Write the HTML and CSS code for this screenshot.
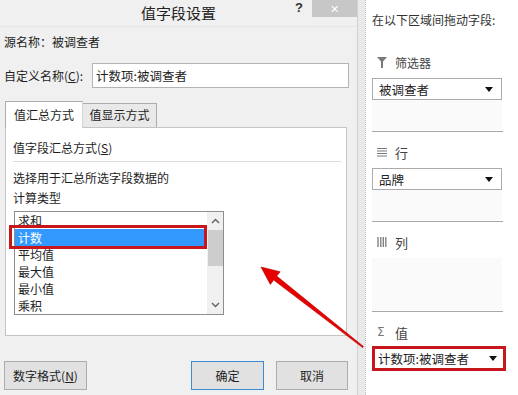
FILE: index.html
```html
<!DOCTYPE html>
<html lang="zh-CN">
<head>
    <meta charset="UTF-8">
    <meta name="viewport" content="width=device-width, initial-scale=1.0">
    <link rel="stylesheet" href="styles.css">
</head>
<body>
    <div class="dialog">
        <div class="titlebar">
            <div class="title">值字段设置</div>
            <div class="title-tools">
                <span class="help">?</span>
                <span class="close">✕</span>
            </div>
        </div>

        <div class="dialog-body">
            <div class="source-row">源名称：被调查者</div>

            <div class="name-row">
                <label class="name-label">自定义名称(<u>C</u>):</label>
                <div class="name-input">计数项:被调查者</div>
            </div>

            <div class="tabs">
                <div class="tab active">值汇总方式</div>
                <div class="tab">值显示方式</div>
            </div>

            <div class="tab-panel">
                <div class="group-title">值字段汇总方式(<u>S</u>)</div>
                <div class="group-line"></div>
                <div class="hint">选择用于汇总所选字段数据的</div>
                <div class="hint">计算类型</div>

                <div class="listbox">
                    <div class="list-items">
                        <div class="list-item">求和</div>
                        <div class="list-item selected">计数</div>
                        <div class="list-item">平均值</div>
                        <div class="list-item">最大值</div>
                        <div class="list-item">最小值</div>
                        <div class="list-item">乘积</div>
                    </div>
                    <div class="scrollbar">
                        <svg class="scroll-arrow" width="9" height="6" viewBox="0 0 9 6"><path d="M1 5 L4.5 1.5 L8 5" fill="none" stroke="#606060" stroke-width="1.4"/></svg>
                        <div class="scroll-thumb"></div>
                        <div class="scroll-track"></div>
                        <svg class="scroll-arrow" width="9" height="6" viewBox="0 0 9 6"><path d="M1 1 L4.5 4.5 L8 1" fill="none" stroke="#606060" stroke-width="1.4"/></svg>
                    </div>
                </div>
            </div>

            <div class="buttons">
                <button class="btn btn-format">数字格式(<u>N</u>)</button>
                <button class="btn btn-ok">确定</button>
                <button class="btn btn-cancel">取消</button>
            </div>
        </div>
    </div>

    <div class="splitter"></div>

    <div class="field-pane">
        <div class="pane-header">在以下区域间拖动字段:</div>

        <div class="zone">
            <div class="zone-title">
                <svg class="zone-icon" width="10" height="11" viewBox="0 0 10 11"><path d="M0 0 H10 L6 4.5 V11 H4 V4.5 Z" fill="#7a7a7a"/></svg>
                <span>筛选器</span>
            </div>
            <div class="zone-area">
                <div class="dropdown">
                    <span>被调查者</span>
                    <svg width="8" height="5" viewBox="0 0 8 5"><path d="M0 0 H8 L4 5 Z" fill="#111"/></svg>
                </div>
            </div>
        </div>

        <div class="zone">
            <div class="zone-title">
                <svg class="zone-icon" width="10" height="9" viewBox="0 0 10 9"><path d="M0 0.5 H10 M0 3 H10 M0 5.5 H10 M0 8 H10" stroke="#7a7a7a" stroke-width="1.2"/></svg>
                <span class="big">行</span>
            </div>
            <div class="zone-area">
                <div class="dropdown">
                    <span>品牌</span>
                    <svg width="8" height="5" viewBox="0 0 8 5"><path d="M0 0 H8 L4 5 Z" fill="#111"/></svg>
                </div>
            </div>
        </div>

        <div class="zone">
            <div class="zone-title">
                <svg class="zone-icon" width="10" height="10" viewBox="0 0 10 10"><path d="M1 0 V10 M3.8 0 V10 M6.3 0 V10 M8.8 0 V10" stroke="#7a7a7a" stroke-width="1.3"/></svg>
                <span class="big">列</span>
            </div>
            <div class="zone-area"></div>
        </div>

        <div class="zone last">
            <div class="zone-title">
                <span class="sigma">Σ</span>
                <span class="big">值</span>
            </div>
            <div class="dropdown marked">
                <span>计数项:被调查者</span>
                <svg width="8" height="5" viewBox="0 0 8 5"><path d="M0 0 H8 L4 5 Z" fill="#111"/></svg>
            </div>
        </div>
    </div>

    <div class="mark-box"></div>

    <svg class="arrow" width="518" height="395" viewBox="0 0 518 395">
        <polygon points="261,267 280.1,271.8 276.7,276.1 363.4,346.4 362.6,347.6 273.7,280.1 270.3,284.4" fill="#e60000" stroke="#b00000" stroke-width="0.6"/>
    </svg>
</body>
</html>
```

FILE: styles.css
```css
* {
    box-sizing: border-box;
}
body {
    margin: 0;
    width: 518px;
    height: 395px;
    overflow: hidden;
    position: relative;
    display: flex;
    background-color: #f0f0f0;
    color: #1e1e1e;
    font-family: "Noto Sans CJK SC", "Liberation Sans", sans-serif;
    font-size: 12px;
}
u {
    text-decoration: underline;
    text-underline-offset: 1px;
}

/* 左侧对话框 */
.dialog {
    width: 357px;
    height: 395px;
    display: flex;
    flex-direction: column;
}
.titlebar {
    height: 27px;
    display: grid;
    grid-template-columns: 1fr auto 1fr;
    border-bottom: 1px solid #e6e6e6;
}
.title {
    grid-column: 2;
    font-size: 15px;
    line-height: 26px;
    color: #222;
}
.title-tools {
    grid-column: 3;
    display: flex;
    justify-content: flex-end;
    align-items: flex-start;
}
.help {
    font-family: "Liberation Sans", sans-serif;
    font-weight: bold;
    font-size: 13px;
    line-height: 16px;
    margin-right: 9px;
    color: #333;
}
.close {
    width: 45px;
    height: 17px;
    background-color: #c7c7c7;
    color: #fff;
    text-align: center;
    line-height: 17px;
    font-size: 11px;
}
.dialog-body {
    flex: 1;
    padding: 0 8px 0 4px;
    display: flex;
    flex-direction: column;
}
.source-row {
    margin-top: 7px;
    line-height: 16px;
}
.name-row {
    margin-top: 13px;
    display: flex;
    align-items: center;
}
.name-label {
    width: 88px;
    line-height: 16px;
}
.name-input {
    flex: 1;
    height: 25px;
    line-height: 23px;
    padding-left: 3px;
    background-color: #fff;
    border: 1px solid #b4b4b4;
    font-size: 12.5px;
}
.tabs {
    margin-top: 13px;
    margin-left: 1px;
    display: flex;
    align-items: flex-end;
    position: relative;
    z-index: 1;
}
.tab {
    width: 74px;
    height: 24px;
    line-height: 22px;
    text-align: center;
    background-color: #e9e9e9;
    border: 1px solid #adadad;
    border-bottom: none;
    border-left: none;
}
.tab.active {
    width: 78px;
    height: 27px;
    line-height: 26px;
    background-color: #fff;
    border-left: 1px solid #adadad;
    border-right: 1px solid #d4d4d4;
    margin-bottom: -1px;
}
.tab-panel {
    margin: 0 2px 0 1px;
    height: 209px;
    background-color: #fff;
    border: 1px solid #c4c4c4;
    padding: 12px 5px 0 7px;
}
.group-title {
    line-height: 16px;
}
.group-line {
    height: 1px;
    background-color: #dcdcdc;
    margin: 5px 0 8px;
}
.hint {
    line-height: 16px;
    margin-bottom: 4px;
}
.listbox {
    margin-top: 5px;
    margin-left: 1px;
    width: 210px;
    height: 104px;
    border: 1px solid #8e8e8e;
    display: flex;
    overflow: hidden;
}
.list-items {
    flex: 1;
}
.list-item {
    height: 17px;
    line-height: 17px;
    padding-left: 3px;
    font-size: 12px;
}
.list-item.selected {
    background-color: #3399ff;
    color: #fff;
    margin-right: 3px;
}
.scrollbar {
    width: 16px;
    background-color: #f0f0f0;
    display: flex;
    flex-direction: column;
    align-items: center;
}
.scroll-arrow {
    margin: 6px 0;
    flex-shrink: 0;
}
.scroll-thumb {
    width: 15px;
    height: 36px;
    background-color: #cdcdcd;
}
.scroll-track {
    flex: 1;
}
.buttons {
    margin-top: 25px;
    display: flex;
    gap: 12px;
}
.btn {
    height: 29px;
    background-color: #e1e1e1;
    border: 1px solid #adadad;
    font-family: inherit;
    font-size: 12px;
    color: #1e1e1e;
    padding: 0;
}
.btn-format {
    width: 83px;
}
.btn-ok {
    width: 73px;
    margin-left: auto;
    border-color: #3c8ad0;
}
.btn-cancel {
    width: 72px;
    margin-right: 1px;
}

/* 中间分隔条 */
.splitter {
    width: 8px;
    background-color: #e9e9e9;
    border-left: 1px solid #d0d0d0;
}

/* 右侧字段列表 */
.field-pane {
    flex: 1;
    background-color: #fff;
    border-left: 1px dotted #b8b8b8;
    padding-left: 6px;
}
.pane-header {
    padding: 12px 0 14px;
    line-height: 16px;
    color: #333;
}
.zone {
    width: 131px;
    padding-top: 12px;
    border-bottom: 1px solid #a8a8a8;
    padding-bottom: 1px;
}
.zone.last {
    border-bottom: none;
}
.zone-title {
    height: 16px;
    display: flex;
    align-items: center;
    color: #444;
    padding-left: 5px;
    margin-bottom: 8px;
}
.zone-icon {
    margin-right: 8px;
}
.zone-title .big {
    font-size: 13px;
}
.sigma {
    font-family: "DejaVu Sans", sans-serif;
    font-size: 12px;
    color: #777;
    margin-right: 8px;
    width: 10px;
}
.zone-area {
    width: 130px;
    height: 52px;
    background-color: #fafafa;
}
.dropdown {
    height: 22px;
    border: 1px solid #ababab;
    background-color: #fff;
    display: flex;
    align-items: center;
    justify-content: space-between;
    padding: 0 8px 0 6px;
    font-size: 12.5px;
    color: #222;
}
.dropdown.marked {
    width: 134px;
    height: 25px;
    margin-top: -2px;
    border: 3px solid #c8161d;
    padding: 0 6px 0 3px;
}

/* 标注 */
.mark-box {
    position: absolute;
    left: 9px;
    top: 225px;
    width: 198px;
    height: 24px;
    border: 3px solid #c8161d;
}
.arrow {
    position: absolute;
    left: 0;
    top: 0;
    pointer-events: none;
}
```
